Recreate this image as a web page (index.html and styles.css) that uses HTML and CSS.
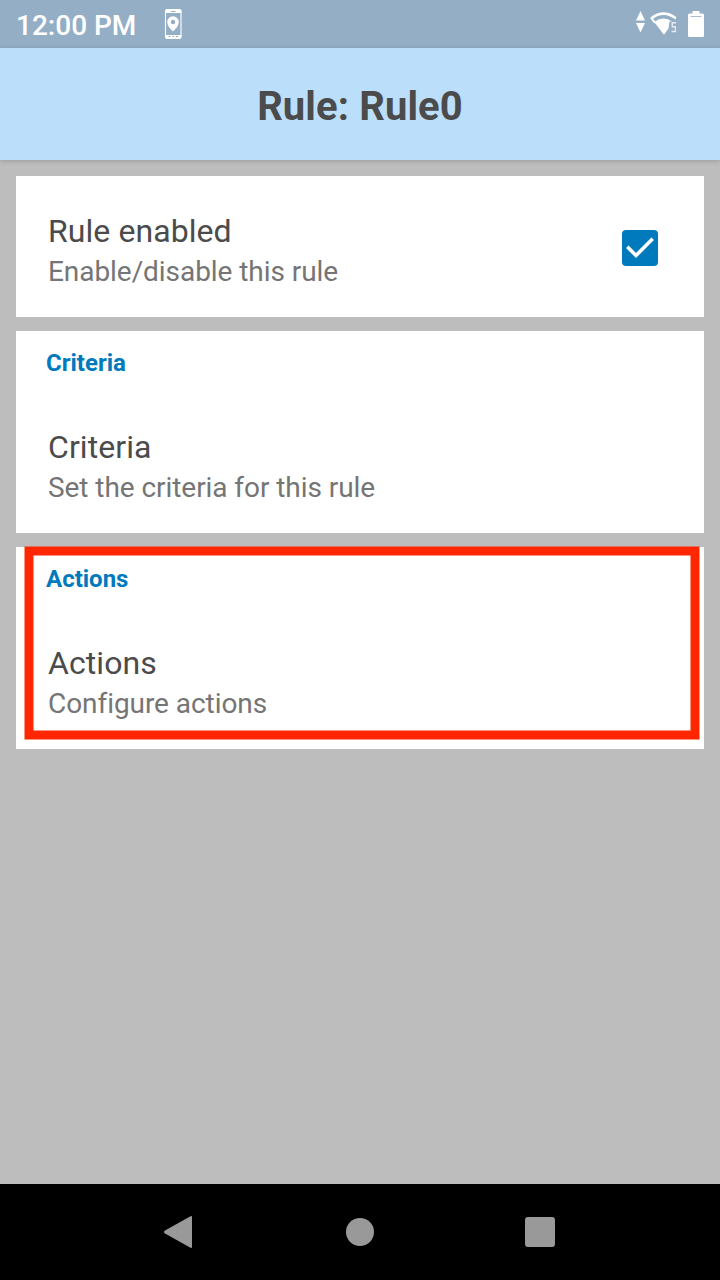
FILE: index.html
```html
<!DOCTYPE html>
<html lang="en">
<head>
<meta charset="utf-8">
<title>Rule: Rule0</title>
<link rel="stylesheet" href="styles.css">
</head>
<body>
<div class="screen">
  <div class="status-bar">
    <span class="clock">12:00 PM</span>
    <svg class="phone-icon" width="18" height="32" viewBox="0 0 18 32">
      <rect x="1.500" y="2" width="15.500" height="28" rx="1.500" fill="none" stroke="#fff" stroke-width="1.100"/>
      <path d="M1 3Q1 1 3 1H15.500Q17.500 1 17.500 3V5H1ZM1 27H17.500V29Q17.500 31 15.500 31H3Q1 31 1 29Z" fill="#fff"/>
      <path d="M7 3.500h4.500M4.500 28.500h2M8.500 28.500h1.500M12 28.500h2" stroke="#94aec6" stroke-width="1"/>
      <path fill-rule="evenodd" d="M9 8.200a5.800 5.800 0 0 0-5.800 5.800C3.200 17.500 6 20.500 9 23.500c3-3 5.800-6 5.800-9.500A5.800 5.800 0 0 0 9 8.200Zm0 3.600a2.200 2.200 0 1 1 0 4.400 2.200 2.200 0 0 1 0-4.400Z" fill="#fff"/>
    </svg>
    <div class="status-icons">
      <svg class="traffic-icon" width="9" height="22" viewBox="0 0 9 22"><path d="M4.500 0 9 9.500H0ZM0 12H9L4.500 21.500Z" fill="#fff"/></svg>
      <svg class="wifi-icon" width="26" height="26" viewBox="0 0 26 26">
        <path d="M1.300 7.400Q13.500-2.200 26.500 7.600" fill="none" stroke="#fff" stroke-width="2.500"/>
        <path d="M1 6.500 5 11.800" stroke="#fff" stroke-width="2"/>
        <path d="M4.200 11Q13.500 4.500 22 10.500H19.500L18.500 17.500 14 23.800Z" fill="#fff"/>
        <path d="M26 11.800H22.300V15.800H26M21.500 20.500H26M25.500 16V20.500" fill="none" stroke="#e5ebf1" stroke-width="1.500"/>
      </svg>
      <svg class="battery-icon" width="16" height="26" viewBox="0 0 16 26"><path d="M4.500 0H11.500V2.500H14.500Q16 2.500 16 4V24.500Q16 26 14.500 26H1.500Q0 26 0 24.500V4Q0 2.500 1.500 2.500H4.500Z" fill="#fff"/><path d="M2.500 5.500H13.500" stroke="#a9bed1"/></svg>
    </div>
  </div>
  <header class="app-bar"><h1 class="app-title">Rule: Rule0</h1></header>
  <main class="content">
    <section class="card card-toggle">
      <div class="texts">
        <div class="item-title">Rule enabled</div>
        <div class="item-summary">Enable/disable this rule</div>
      </div>
      <svg class="checkbox" width="36" height="36" viewBox="0 0 36 36"><rect width="36" height="36" rx="4" fill="#007abd"/><path d="M5.300 16.800 14 25.500 30.700 8.800" fill="none" stroke="#fff" stroke-width="3.600"/></svg>
    </section>
    <section class="card card-group">
      <h2 class="group-title">Criteria</h2>
      <div class="texts">
        <div class="item-title">Criteria</div>
        <div class="item-summary">Set the criteria for this rule</div>
      </div>
    </section>
    <section class="card card-group">
      <h2 class="group-title">Actions</h2>
      <div class="texts">
        <div class="item-title">Actions</div>
        <div class="item-summary">Configure actions</div>
      </div>
      <svg class="highlight" width="688" height="202" viewBox="0 0 688 202"><rect x="13" y="4" width="666" height="184" fill="none" stroke="#ff2600" stroke-width="9"/></svg>
    </section>
  </main>
  <nav class="nav-bar">
    <svg class="nav-icon" viewBox="0 0 40 40"><path d="M5 18.500 30.500 4.200Q32 3.500 32 5.200V34.800Q32 36.500 30.500 35.800L5 21.500Q3 20 5 18.500Z" fill="#999"/></svg>
    <svg class="nav-icon" viewBox="0 0 40 40"><circle cx="20" cy="20" r="14" fill="#999"/></svg>
    <svg class="nav-icon" viewBox="0 0 40 40"><rect x="5" y="5" width="30" height="30" rx="3" fill="#999"/></svg>
  </nav>
</div>
</body>
</html>
```
FILE: styles.css
```css
body {
  margin: 0;
  font-family: Roboto, sans-serif;
  color: #4b4b4b;
}
.screen {
  display: flex;
  flex-direction: column;
  width: 720px;
  height: 1280px;
  background: #bdbdbd;
  overflow: hidden;
}
.status-bar {
  display: flex;
  align-items: center;
  box-sizing: border-box;
  height: 48px;
  padding: 0 16px;
  background: #94aec6;
}
.clock {
  width: 148px;
  padding-top: 4px;
  font-size: 28px;
  font-weight: 500;
  line-height: 34px;
  color: #fff;
  white-space: nowrap;
}
.status-icons {
  display: flex;
  align-items: center;
  margin-left: auto;
}
.traffic-icon { margin: 0 5px 4px 0; }
.wifi-icon { margin-right: 12px; }
.app-bar {
  display: flex;
  align-items: center;
  justify-content: center;
  height: 112px;
  background: #bbdefb;
  box-shadow: 0 1px 5px rgba(0, 0, 0, .18);
}
.app-title {
  margin: 0;
  padding-top: 6px;
  font-size: 40px;
  font-weight: 700;
  line-height: 48px;
  letter-spacing: .1px;
}
.content {
  flex: 1;
  display: flex;
  flex-direction: column;
  gap: 14px;
  padding: 16px;
}
.card {
  position: relative;
  box-sizing: border-box;
  background: #fff;
}
.card-toggle {
  display: flex;
  justify-content: space-between;
  height: 141px;
  padding: 34px 46px 0 32px;
}
.checkbox { margin-top: 20px; }
.card-group {
  height: 202px;
  padding: 17px 32px 0;
}
.group-title {
  margin: 0 0 48px -2px;
  font-size: 24px;
  font-weight: 700;
  line-height: 30px;
  color: #007abd;
}
.item-title {
  font-size: 32px;
  line-height: 42px;
  letter-spacing: .07px;
}
.item-summary {
  font-size: 28px;
  line-height: 40px;
  letter-spacing: -.06px;
  color: #757575;
}
.highlight {
  position: absolute;
  top: 0;
  left: 0;
  overflow: visible;
}
.nav-bar {
  display: flex;
  align-items: center;
  justify-content: center;
  gap: 140px;
  height: 96px;
  background: #000;
}
.nav-icon {
  width: 40px;
  height: 40px;
}
```
